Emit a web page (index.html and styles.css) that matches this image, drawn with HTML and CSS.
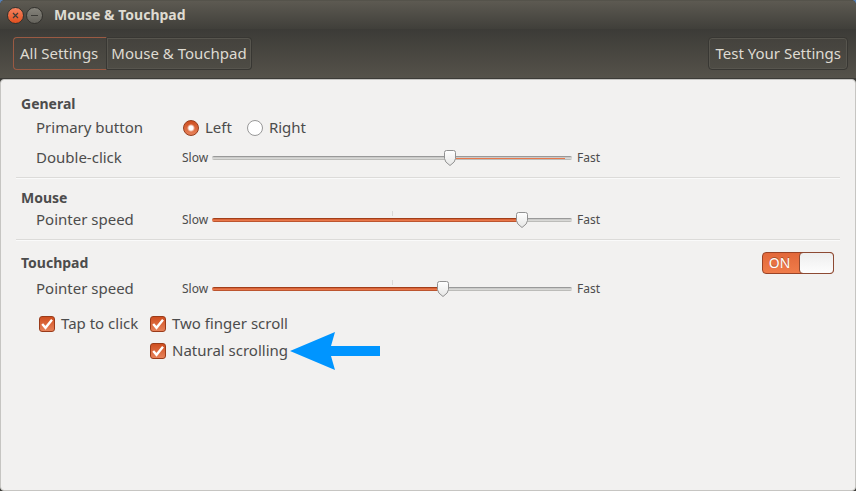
FILE: index.html
```html
<!DOCTYPE html>
<html lang="en">
<head>
<meta charset="utf-8">
<title>Mouse &amp; Touchpad</title>
<link rel="stylesheet" href="styles.css">
</head>
<body>
<div class="window">
  <header class="titlebar">
    <button class="win-button close" type="button" aria-label="Close"><svg viewBox="0 0 15 15"><path d="M5 5l5 5M10 5l-5 5"/></svg></button>
    <button class="win-button minimize" type="button" aria-label="Minimize"><svg viewBox="0 0 15 15"><path d="M4 7.5h7"/></svg></button>
    <h1>Mouse &amp; Touchpad</h1>
  </header>
  <nav class="toolbar">
    <div class="path">
      <button class="tool path-all" type="button">All Settings</button>
      <button class="tool path-current" type="button">Mouse &amp; Touchpad</button>
    </div>
    <button class="tool test" type="button">Test Your Settings</button>
  </nav>
  <main class="content">
    <section class="panel general">
      <h2>General</h2>
      <div class="row" role="radiogroup" aria-labelledby="primary">
        <span class="name" id="primary">Primary button</span>
        <label class="choice"><input class="radio" type="radio" name="primary" checked><span>Left</span></label>
        <label class="choice"><input class="radio" type="radio" name="primary"><span>Right</span></label>
      </div>
      <div class="row double-click">
        <label class="name" for="double">Double-click</label>
        <span class="mark">Slow</span>
        <input class="slider reversed" id="double" type="range" max="1000" value="667" style="--value:66.7%">
        <span class="mark">Fast</span>
      </div>
    </section>
    <section class="panel mouse">
      <h2>Mouse</h2>
      <div class="row">
        <label class="name" for="mouse-speed">Pointer speed</label>
        <span class="mark">Slow</span>
        <input class="slider filled" id="mouse-speed" type="range" max="1000" value="874" style="--value:87.4%">
        <span class="mark">Fast</span>
      </div>
    </section>
    <section class="panel touchpad">
      <div class="heading">
        <h2 id="touchpad">Touchpad</h2>
        <button class="switch" type="button" role="switch" aria-checked="true" aria-labelledby="touchpad"><span class="state">ON</span><span class="knob"></span></button>
      </div>
      <div class="row">
        <label class="name" for="pad-speed">Pointer speed</label>
        <span class="mark">Slow</span>
        <input class="slider filled" id="pad-speed" type="range" max="1000" value="647" style="--value:64.7%">
        <span class="mark">Fast</span>
      </div>
      <div class="options">
        <label class="choice"><input class="check" type="checkbox" checked><span>Tap to click</span></label>
        <label class="choice"><input class="check" type="checkbox" checked><span>Two finger scroll</span></label>
        <label class="choice natural"><input class="check" type="checkbox" checked><span>Natural scrolling</span>
          <svg class="arrow" viewBox="0 0 90 38" aria-hidden="true"><path d="M0 19L45 0L41 14H90V24H41L45 38Z"/></svg>
        </label>
      </div>
    </section>
  </main>
</div>
</body>
</html>
```
FILE: styles.css
```css
* {
  box-sizing: border-box;
}

body {
  margin: 0;
  background: #5680b5;
  color: #4c4c4c;
  font: 15px/22px "Noto Sans", sans-serif;
}

button {
  margin: 0;
  padding: 0;
  font: inherit;
}

h1,
h2 {
  margin: 0;
  font-size: 14px;
  line-height: 22px;
  font-weight: 700;
}

.window {
  display: flex;
  flex-direction: column;
  min-height: 100vh;
  overflow: hidden;
  border-radius: 5px 5px 0 0;
  background: #3c3b37;
}

.titlebar {
  display: flex;
  align-items: center;
  gap: 2px;
  height: 29px;
  padding: 0 7px;
  border-top: 1px solid #55534b;
  background: linear-gradient(#5d5a52, #403f3a);
  color: #dfdbd2;
}

.titlebar h1 {
  margin-left: 9px;
}

.win-button {
  width: 17px;
  height: 17px;
  border: 1px solid #32312d;
  border-radius: 50%;
  background: linear-gradient(#85837b, #65635c);
}

.win-button svg {
  display: block;
  width: 15px;
  height: 15px;
  fill: none;
  stroke: #3c3b37;
  stroke-width: 1.2;
}

.close {
  background: linear-gradient(#f58360, #e2501f);
}

.toolbar {
  display: flex;
  justify-content: space-between;
  height: 50px;
  padding: 8px 8px 0 13px;
  border-bottom: 1px solid #3c3b37;
  background: linear-gradient(#3c3b37, #55524a);
}

.path {
  display: flex;
}

.tool {
  height: 33px;
  padding: 0 6px 2px;
  border: 1px solid #383733;
  border-radius: 4px;
  background: linear-gradient(#44423d, #4e4c45);
  box-shadow: inset 0 0 0 1px #57554e;
  color: #dfdbd2;
  line-height: 28px;
}

.path-all {
  padding-right: 8px;
  border-color: #9a5a43;
  border-right-color: #383733;
  border-radius: 4px 0 0 4px;
  box-shadow: none;
}

.path-current {
  padding: 0 4px 2px;
  border-left: 0;
  border-radius: 0 4px 4px 0;
}

.content {
  flex: 1;
  padding: 13px 15px 0;
  border: 1px solid #c6c5c2;
  border-radius: 4px;
  background: #f2f1f0;
}

.panel {
  padding: 0 6px 0 5px;
}

.general,
.mouse {
  padding-bottom: 8px;
  border-bottom: 1px solid #dcdbd9;
  box-shadow: 0 1px #fafafa;
}

.mouse {
  padding-top: 9px;
}

.touchpad {
  padding-top: 12px;
}

.row {
  display: flex;
  align-items: center;
  height: 22px;
  padding-left: 15px;
}

.general h2 {
  margin-bottom: 2px;
}

.double-click {
  margin-top: 8px;
}

.name,
.choice span {
  padding-bottom: 2px;
  line-height: 20px;
}

.name {
  width: 146px;
}

.mark {
  width: 25px;
  font-size: 12px;
}

.row .choice {
  margin: 0 14px 0 1px;
}

.choice {
  display: flex;
  align-items: center;
  gap: 6px;
}

.radio,
.check {
  appearance: none;
  flex: none;
  width: 16px;
  height: 16px;
  margin: 0;
}

.radio {
  border: 1px solid #989898;
  border-radius: 50%;
  background: #fff;
}

.radio:checked {
  border-color: #963d1c;
  background: radial-gradient(circle, #fff 2px, transparent 4px), linear-gradient(#cf4e1f, #e7825a);
}

.check {
  border: 1px solid #9a3b19;
  border-radius: 3px;
  background: #fff;
}

.check:checked {
  background:
    url("data:image/svg+xml,%3Csvg xmlns='http://www.w3.org/2000/svg' viewBox='0 0 14 14'%3E%3Cpath d='M2.200 7l3.300 3.800 6.500-8' fill='none' stroke='white' stroke-width='2.4'/%3E%3C/svg%3E"),
    linear-gradient(#cf4e1f, #e7825a);
}

.slider {
  appearance: none;
  width: 360px;
  height: 20px;
  margin: 0 5px;
  background: none;
}

.slider::-webkit-slider-runnable-track {
  height: 4px;
  border-radius: 2px;
  background: linear-gradient(#999 0 1px, #cbcbc9 1px 2px, #d8d8d6 2px 3px, #bcbcb9 3px);
}

.slider::-webkit-slider-thumb {
  appearance: none;
  width: 12px;
  height: 16px;
  margin-top: -6px;
  background: url("data:image/svg+xml,%3Csvg xmlns='http://www.w3.org/2000/svg' viewBox='0 0 12 16'%3E%3ClinearGradient id='g' x2='0' y2='1'%3E%3Cstop stop-color='%23fff'/%3E%3Cstop offset='1' stop-color='%23e6e6e5'/%3E%3C/linearGradient%3E%3Cpath d='M2.5 .5h7q2 0 2 2v6q0 3.500-5.500 7Q.5 12 .5 8.500v-6q0-2 2-2z' fill='url(%23g)' stroke='%23919191'/%3E%3C/svg%3E");
}

.filled {
  background: linear-gradient(#dad9d7, #dad9d7) center 1px / 1px 5px no-repeat;
}

.filled::-webkit-slider-runnable-track {
  background:
    linear-gradient(#a23e19 0 1px, #d9663a 1px 2px, #e9774a 2px 3px, #bd552f 3px) 0 0 / var(--value) 100% no-repeat,
    linear-gradient(#999 0 1px, #cbcbc9 1px 2px, #d8d8d6 2px 3px, #bcbcb9 3px);
}

.reversed::-webkit-slider-runnable-track {
  background:
    linear-gradient(to right, transparent var(--value), #e9774a var(--value) 98%, transparent 98%) 0 2px / 100% 1px no-repeat,
    linear-gradient(#999 0 1px, #cbcbc9 1px 2px, #d8d8d6 2px 3px, #bcbcb9 3px);
}

.heading {
  display: flex;
  justify-content: space-between;
  margin-bottom: 4px;
}

.switch {
  display: flex;
  width: 72px;
  height: 22px;
  border: 1px solid #9a4326;
  border-radius: 4px;
  background: linear-gradient(#e2683a, #f07c4a);
  color: #fff;
  font-size: 14px;
  line-height: 20px;
}

.state {
  flex: 1;
  padding-right: 4px;
  text-shadow: 0 -1px #a8502d;
}

.knob {
  width: 35px;
  height: 22px;
  margin: -1px;
  border: 1px solid #8d4a33;
  border-radius: 4px;
  background: linear-gradient(#eee, #fdfdfd);
}

.options {
  display: grid;
  grid-template-columns: 111px max-content;
  row-gap: 5px;
  padding: 13px 0 0 18px;
}

.natural {
  position: relative;
  grid-column: 2;
}

.arrow {
  position: absolute;
  left: 140px;
  width: 90px;
  height: 38px;
  fill: #0095ff;
}
```
